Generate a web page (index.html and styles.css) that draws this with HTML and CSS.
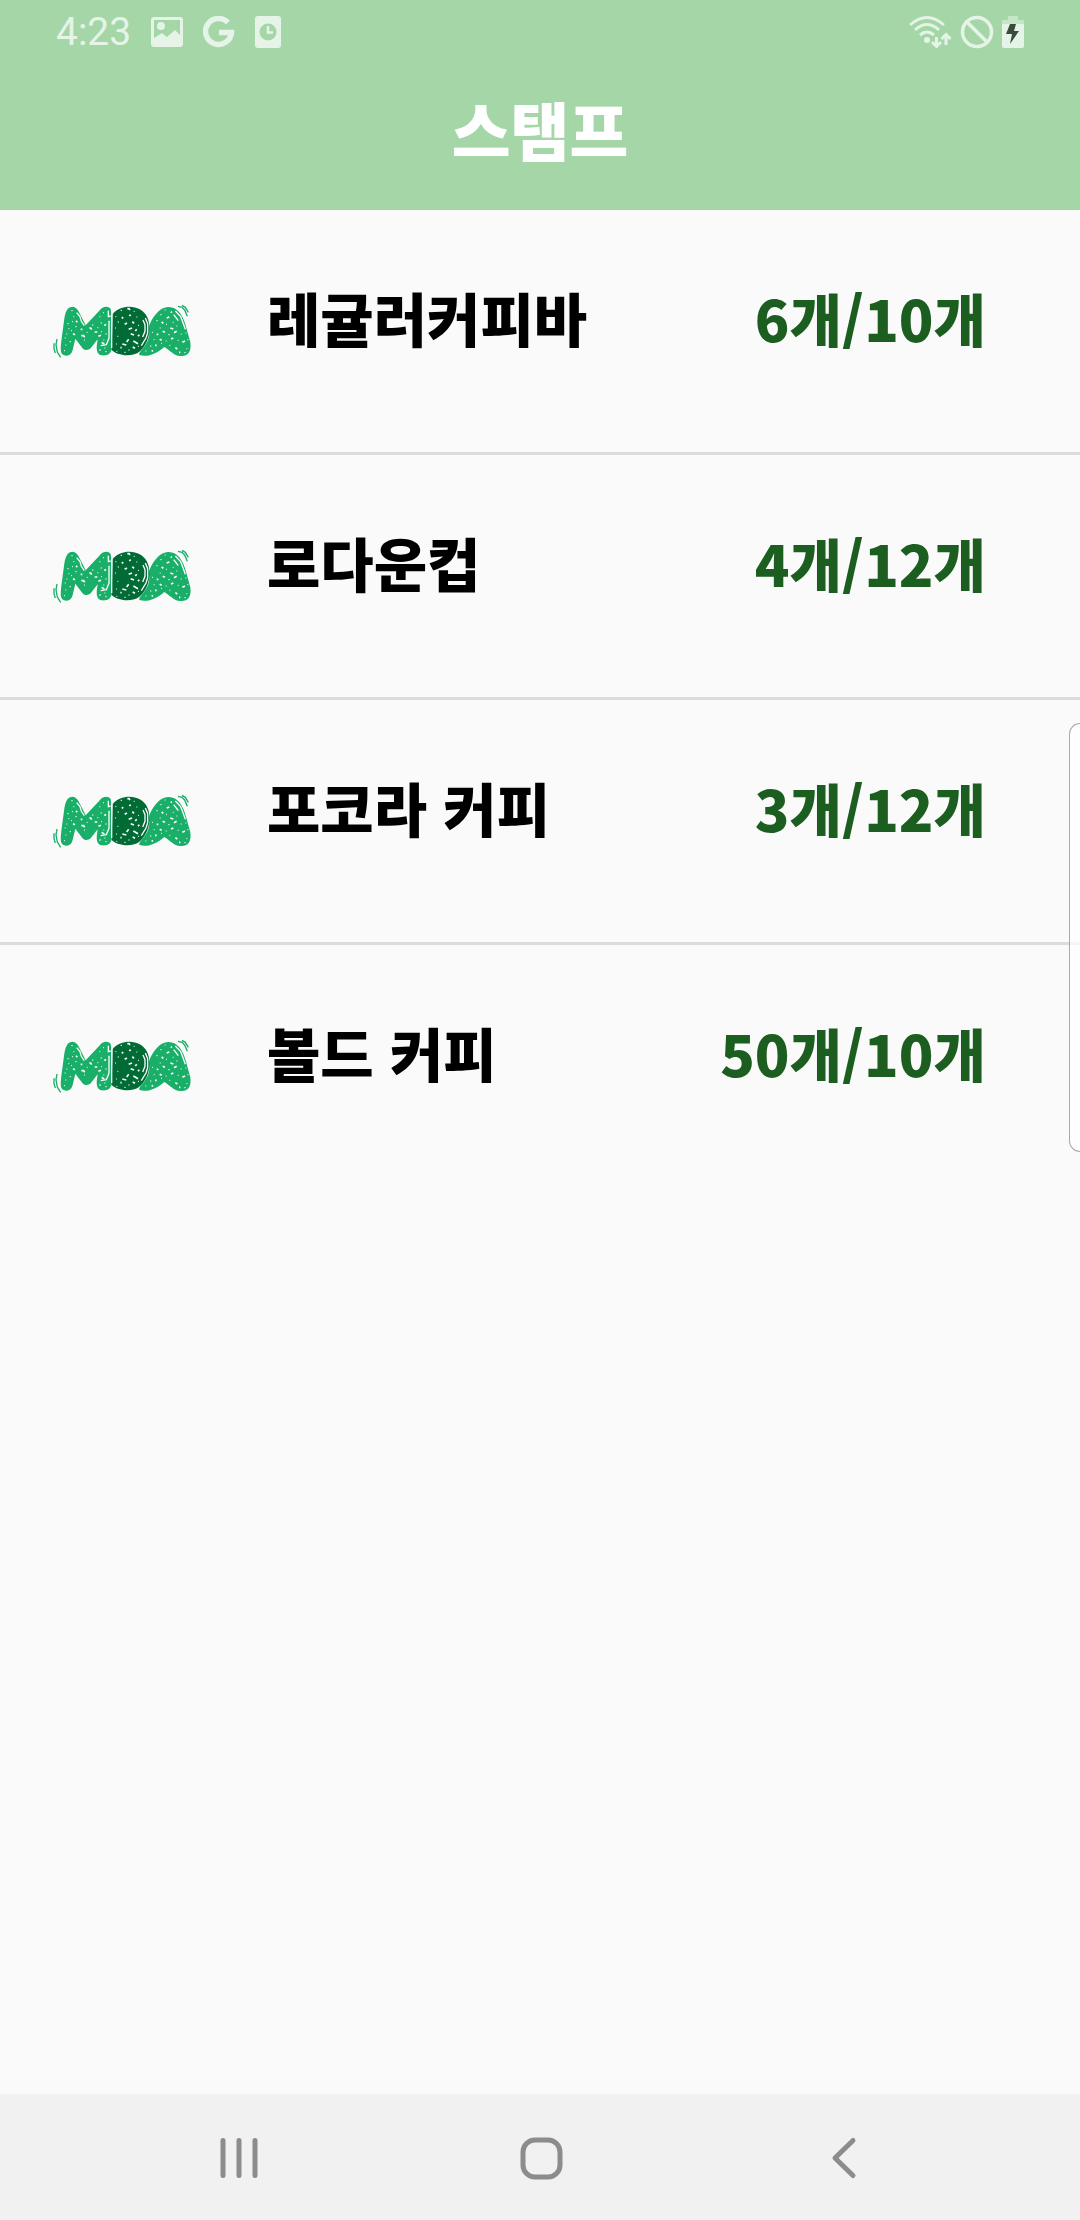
FILE: index.html
```html
<!DOCTYPE html>
<html lang="ko">
<head>
<meta charset="utf-8">
<meta name="viewport" content="width=device-width, initial-scale=1">
<title>스탬프</title>
<link rel="stylesheet" href="styles.css">
</head>
<body>
<svg class="sprite" aria-hidden="true">
  <symbol id="moa" viewBox="34 40 420 165">
    <path fill="#1aaf68" d="M88 50C100 44 111 53 118 70L135 104L176 60C184 48 202 43 210 55L213 80V176C210 192 196 196 183 194C171 192 166 180 169 160L171 146L150 173C142 180 132 180 125 172L104 144L96 178C92 194 80 199 67 192C58 186 60 170 62 150L70 91C73 68 78 54 88 50Z"/>
    <path fill="#1aaf68" d="M327 101C340 72 359 50 382 49C412 48 427 75 436 108L449 155C453 187 440 198 418 196C400 195 387 179 371 169C350 188 321 201 296 193C292 184 316 168 323 145C329 130 322 116 327 101Z"/>
    <path fill="#006b35" d="M216 70C236 46 274 42 297 56C318 68 327 88 326 114C327 151 304 184 281 191C253 199 224 189 213 178Z"/>
    <path fill="none" stroke="#fafafa" stroke-width="4" d="M108 66L118 78L122 92L131 105M203 60V78L210 76M213 68V172M205 90V142L197 162L180 165M314 82L321 99V126L316 142L302 165M307 88L313 102V122L306 139M404 61L420 78L427 96L434 116M399 72L413 90"/>
    <path fill="none" stroke="#1aaf68" stroke-width="4" d="M412 47L424 50L432 58L440 77M424 44L434 50L443 65M49 145L46 162L50 184L60 200M40 158V174L44 187"/>
    <path fill="none" stroke="#fafafa" stroke-width="3" d="M92 60h4M98 78h3M94 93h3M80 99h4M104 108h4M83 114h3M91 120h3M77 130h3M72 142h3M138 125h3M130 148h3M87 153h4M74 163h3M70 180h3M154 103h4M176 78h3M187 66h3M180 97h4M170 111h3M181 123h3M194 130h4M188 148h3M191 172h3M194 183h4M240 59h4M279 62h3M224 78h3M287 79h3M231 94h4M292 104h3M223 112h3M230 137h3M226 160h3M263 178h4M227 182h3M251 185h4M292 167h3M372 58h3M359 72h4M396 95h3M347 90h4M357 112h3M376 101h3M407 106h3M334 125h3M383 132h4M420 130h3M434 127h3M339 147h3M375 151h3M411 149h3M440 147h3M328 166h4M361 158h3M386 164h3M437 174h3M314 181h3M431 186h4"/>
    <path fill="none" stroke="#fafafa" stroke-width="5" d="M106 90l4 5M97 129l6 3M122 135h7l3 5M146 112h4l3 5M162 124h8M173 137l8-3M183 155l8 5M176 178h4M191 105l5-4M120 116h5M260 54h5l3 4M243 80l5 3M266 76l4-4M252 101l7-4M275 93l5 5M264 116l10-4M284 121l4-5M270 129l10 4M292 137l4-5M264 146l-6 8M278 151l14 8M245 160l12 3M276 169l7 4M239 171h4M390 66l4-3M378 82l8-3M363 94l5 4M389 112l9 3M366 122l7 3M400 126l8-4M348 131h5M357 146l6 3M391 145l7-3M425 155l8-4M404 171l6 4M343 164h5M333 182l4-3M415 185h4"/>
  </symbol>
</svg>

<header class="top">
  <div class="status">
    <div class="status-group">
      <time class="clock">4:23</time>
      <svg class="s-photo" viewBox="0 0 32 30" aria-hidden="true"><path fill="currentColor" fill-rule="evenodd" d="M3 0H29Q32 0 32 3V27Q32 30 29 30H3Q0 30 0 27V3Q0 0 3 0ZM3 3V21L11 16L16 20L24 13L29 18V3Z"/><circle cx="10" cy="9" r="4" fill="currentColor"/></svg>
      <svg class="s-google" viewBox="0 0 32 32" aria-hidden="true"><path fill="none" stroke="currentColor" stroke-width="5.500" d="M25 6.500A13 13 0 1 0 28.500 16.500H16"/></svg>
      <svg class="s-clock" viewBox="0 0 26 32" aria-hidden="true"><rect width="26" height="32" rx="3" fill="currentColor"/><circle cx="13" cy="16" r="8.500" fill="#a5d6a7"/><path fill="none" stroke="currentColor" stroke-width="2.500" d="M13 10V16.500H18"/></svg>
    </div>
    <div class="status-group right">
      <svg class="s-wifi" viewBox="0 0 44 34" aria-hidden="true"><g fill="none" stroke="currentColor" stroke-width="3"><path d="M2 10Q19 -5 36 10M7 15Q19 4 31 15M12 20Q19 14 26 20"/><path d="M28.500 22V31M24 27L28.500 31.500L33 27M38 30V20M33.500 24L38 19.500L42.500 24"/></g><circle cx="19" cy="25" r="3" fill="currentColor"/></svg>
      <svg class="s-block" viewBox="0 0 34 34" aria-hidden="true"><circle cx="17" cy="17" r="14.500" fill="none" stroke="currentColor" stroke-width="3.500"/><path stroke="currentColor" stroke-width="3.500" d="M7 7L27 27"/></svg>
      <svg class="s-battery" viewBox="0 0 22 34" aria-hidden="true"><path fill="#c6e6c8" d="M6 1H16V5H22V10H0V5H6Z"/><path fill="currentColor" d="M0 9H22V31Q22 33 20 33H2Q0 33 0 31Z"/><path fill="#3a4b3b" d="M8 9H14L12 16H17L8 29L10 19H4Z"/></svg>
    </div>
  </div>
  <h1 class="title">스탬프</h1>
</header>

<main class="content">
  <ul class="stamps">
    <li class="stamp"><svg class="logo" role="img" aria-label="MOA"><use href="#moa"/></svg><span class="name">레귤러커피바</span><span class="count">6개/10개</span></li>
    <li class="stamp"><svg class="logo" role="img" aria-label="MOA"><use href="#moa"/></svg><span class="name">로다운컵</span><span class="count">4개/12개</span></li>
    <li class="stamp"><svg class="logo" role="img" aria-label="MOA"><use href="#moa"/></svg><span class="name">포코라 커피</span><span class="count">3개/12개</span></li>
    <li class="stamp"><svg class="logo" role="img" aria-label="MOA"><use href="#moa"/></svg><span class="name">볼드 커피</span><span class="count">50개/10개</span></li>
  </ul>
</main>
<div class="edge-panel"></div>

<nav class="nav">
  <button class="nav-button" type="button" aria-label="최근 앱"><svg viewBox="0 0 44 44"><path d="M6 4.500V39.500M22 4.500V39.500M38 4.500V39.500"/></svg></button>
  <button class="nav-button" type="button" aria-label="홈"><svg viewBox="0 0 44 44"><rect x="4" y="4" width="37" height="37" rx="12"/></svg></button>
  <button class="nav-button" type="button" aria-label="뒤로"><svg viewBox="0 0 44 44"><path d="M32 4.500L14 22L32 39.500"/></svg></button>
</nav>
</body>
</html>
```
FILE: styles.css
```css
* {
  box-sizing: border-box;
}

body {
  position: relative;
  display: flex;
  flex-direction: column;
  min-height: 100vh;
  margin: 0;
  overflow-x: hidden;
  background: #fafafa;
  color: #000;
  font-family: "Noto Sans CJK KR", sans-serif;
}

.sprite {
  position: absolute;
  width: 0;
  height: 0;
}

.top {
  height: 210px;
  background: #a5d6a7;
  color: #fff;
}

.status {
  display: flex;
  align-items: center;
  justify-content: space-between;
  height: 64px;
  padding: 0 56px;
  color: #e6f4e7;
}

.status-group {
  display: flex;
  align-items: center;
  gap: 20px;
}

.status-group.right {
  gap: 8px;
}

.clock {
  font: 400 39px/40px Roboto, sans-serif;
}

.s-photo {
  width: 32px;
  height: 30px;
}

.s-google {
  width: 32px;
  height: 32px;
}

.s-clock {
  width: 26px;
  height: 32px;
}

.s-wifi {
  width: 44px;
  height: 34px;
}

.s-block {
  width: 34px;
  height: 34px;
}

.s-battery {
  width: 22px;
  height: 34px;
}

.title {
  margin: 0;
  font-size: 64px;
  font-weight: 900;
  line-height: 128px;
  text-align: center;
}

.content {
  flex: 1;
}

.stamps {
  margin: 0;
  padding: 0;
  list-style: none;
}

.stamp {
  display: flex;
  align-items: center;
  height: 245px;
  padding: 0 94px 0 52px;
  border-bottom: 3px solid #dcdcdc;
}

.stamp:last-child {
  border-bottom-color: transparent;
}

.logo {
  width: 140px;
  height: 55px;
  flex: none;
}

.name,
.count {
  padding-bottom: 28px;
  font-weight: 900;
  line-height: 72px;
  white-space: nowrap;
}

.name {
  flex: 1;
  padding-left: 75px;
  font-size: 58px;
}

.count {
  color: #1b5e20;
  font-size: 57px;
}

.edge-panel {
  position: absolute;
  top: 723px;
  right: 0;
  width: 11px;
  height: 429px;
  border: 1px solid #aaa;
  border-right: 0;
  border-radius: 14px 0 0 14px;
  background: rgba(255, 255, 255, 0.7);
}

.nav {
  display: grid;
  grid-template-columns: repeat(3, 1fr);
  height: 126px;
  padding: 2px 86px 0 88px;
  background: #f1f1f1;
}

.nav-button {
  display: flex;
  align-items: center;
  justify-content: center;
  padding: 0;
  border: 0;
  background: none;
}

.nav-button svg {
  width: 44px;
  height: 44px;
  fill: none;
  stroke: #8c8c8c;
  stroke-width: 5;
  stroke-linecap: round;
  stroke-linejoin: round;
}
```
